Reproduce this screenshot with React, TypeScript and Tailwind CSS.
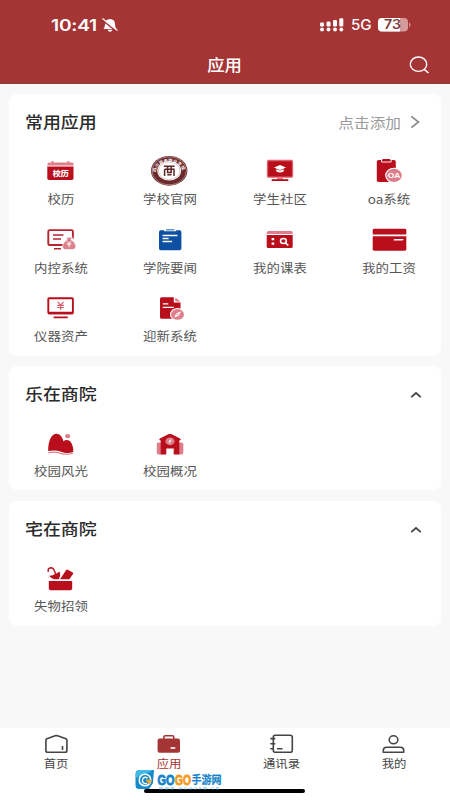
import type { ReactNode } from 'react'

const RED = '#b90f1c'
const PINK = '#dd7f8a'

function Icon({ children }: { children: ReactNode }) {
  return (
    <svg width="40" height="34" viewBox="0 0 40 34" fill="none" className="block shrink-0">
      {children}
    </svg>
  )
}

const CalendarIcon = (
  <Icon>
    <path d="M6.5 11.6V10q0-1.6 1.6-1.6h2.6V7h1.8v1.4h14V7h1.8v1.4h2.6q1.6 0 1.6 1.6v1.6z" fill={PINK} />
    <path d="M6.3 12.6h26.2v11.6q0 1.8-1.8 1.8H8.1q-1.8 0-1.8-1.8z" fill={RED} />
    <text x="11.8" y="22" fontSize="7" fontWeight="900" textLength="16" lengthAdjust="spacingAndGlyphs" fill="#fff" fontFamily="'Noto Sans CJK SC', sans-serif">
      校历
    </text>
  </Icon>
)

const SealIcon = (
  <Icon>
    <defs>
      <path id="sealArc" d="M6 20.5A13.4 10.6 0 1 1 32.4 20.5" />
    </defs>
    <ellipse cx="19.2" cy="16.8" rx="18.2" ry="14.9" fill="#6b2a2b" />
    <ellipse cx="19.2" cy="16.8" rx="17.2" ry="13.9" stroke="#e7cfcd" strokeWidth=".5" />
    <ellipse cx="19.2" cy="16.8" rx="11.9" ry="9.8" fill="#fff" />
    <ellipse cx="19.2" cy="16.8" rx="10.8" ry="8.8" stroke="#b58b89" strokeWidth=".5" />
    <text fontSize="4.2" fontWeight="700" fill="#fff" fontFamily="'Noto Sans CJK SC', sans-serif">
      <textPath href="#sealArc" startOffset="5%" textLength="35">四川商务职业学院</textPath>
    </text>
    <path d="M13.8 12.2h10.8M14.6 15.2h9.4v6.8M14.6 15.2v6.8M17.6 12.500v6h3.600v-6M17.300 20.800h4.200" stroke="#5c2423" strokeWidth="1.500" />
  </Icon>
)

const CommunityIcon = (
  <Icon>
    <rect x="7.5" y="6.5" width="25" height="16.6" rx="1.2" fill={RED} stroke="#e0606b" strokeWidth="1.3" />
    <path d="M17 23.5h6v2.6h-6z" fill={PINK} />
    <path d="M11.7 25.2h16.6v1.8H11.7z" fill={RED} />
    <path d="M20 11l6 2.6-6 2.6-6-2.6z" fill="#fff" />
    <path d="M16.2 15.2l3.8 1.6 3.8-1.6v2q-3.8 2.6-7.6 0z" fill="#fff" />
  </Icon>
)

const OaIcon = (
  <Icon>
    <rect x="7.8" y="6" width="19" height="22" rx="1.8" fill={RED} />
    <path d="M12.500 5.400v2.600h9.600V5.400" stroke="#fff" strokeWidth=".9" />
    <path d="M13.400 5h7.800v1.700h-7.800z" fill={RED} />
    <ellipse cx="25" cy="21.400" rx="8.300" ry="7.200" fill={PINK} stroke="#fff" strokeWidth="1.100" />
    <text x="18.700" y="24.200" fontSize="7.800" fontWeight="700" textLength="12.600" lengthAdjust="spacingAndGlyphs" fill="#fff" fontFamily="'Liberation Sans', sans-serif">
      OA
    </text>
  </Icon>
)

const ControlIcon = (
  <Icon>
    <path d="M22 22H8.600q-1.300 0-1.300-1.300V8.400q0-1.300 1.300-1.300h22q1.300 0 1.300 1.300v7" stroke="#b52532" strokeWidth="1.900" />
    <path d="M12 12h10.500M12 16h8M13 25.800h7" stroke="#b52532" strokeWidth="1.600" />
    <path d="M25.200 14.200h6.200l-1.400 2.400q5 3.200 4.800 7-.2 3-3 3h-7.400q-3 0-3-3 0-3.800 4.800-7z" fill={PINK} stroke="#fff" strokeWidth=".7" />
    <path d="M26.200 18.400l1.900 2 1.900-2M25.800 21h4.600M28.100 20.400v3.800" stroke="#fff" strokeWidth="1" />
  </Icon>
)

const NewsIcon = (
  <Icon>
    <path d="M10.800 7.200h3.400v1h12v-1h3.400q1.800 0 1.800 1.800v16.500q0 1.800-1.800 1.800H10.800Q9 27.300 9 25.500V9q0-1.800 1.800-1.800z" fill="#0d4fa0" />
    <path d="M16 6.200h8.400v1.200H16z" fill="#3f78bd" />
    <path d="M12.600 12.500h14.800M12.600 15.500h6M12.600 18.500h9.500" stroke="#fff" strokeWidth="1.300" />
  </Icon>
)

const TimetableIcon = (
  <Icon>
    <path d="M6.700 10.900V9.600q0-1.600 1.600-1.600h22.800q1.600 0 1.600 1.600v1.300z" fill={PINK} />
    <path d="M6.700 11.900h26v11.500q0 1.700-1.700 1.700H8.400q-1.700 0-1.700-1.700z" fill={RED} />
    <path d="M11.600 15.100h2.600v2.200h-2.600zM11.600 19.500h2.600v2.200h-2.600z" fill="#fff" />
    <ellipse cx="23.400" cy="17.900" rx="2.900" ry="2.500" stroke="#fff" strokeWidth="1.500" />
    <path d="M25.300 19.800l3 2.500" stroke="#fff" strokeWidth="1.700" />
  </Icon>
)

const SalaryIcon = (
  <Icon>
    <path d="M3.700 11.500V7.200q0-1.400 1.400-1.400h30.800q1.400 0 1.400 1.400v4.300z" fill={RED} />
    <path d="M3.700 13.200h33.600v13.100q0 1.400-1.400 1.400H5.100q-1.400 0-1.400-1.400z" fill={RED} />
    <path d="M25.200 15.900h9.500l-1 1.600h-9.200z" fill="#fff" />
  </Icon>
)

const AssetIcon = (
  <Icon>
    <rect x="7.300" y="7.200" width="24.600" height="15.200" rx=".8" stroke={RED} strokeWidth="1.900" />
    <path d="M7 20.700h25.200v2.500H7zM12.600 25.400h14.200v1.900H12.600z" fill={RED} />
    <path d="M16.700 10.800l2.900 3.300 2.900-3.300M16.300 14.300h6.600M16.300 16.500h6.600M19.600 14v5" stroke="#d35f6a" strokeWidth="1.200" />
  </Icon>
)

const WelcomeIcon = (
  <Icon>
    <path d="M11.500 6.200h12.300v5.300h6.700v14.800q0 1.500-1.500 1.500H11.500q-1.500 0-1.500-1.500V7.700q0-1.500 1.500-1.500z" fill={RED} />
    <path d="M25.300 6.400l5.200 4h-5.200z" fill={PINK} />
    <path d="M12.800 12.900h5.500M12.800 16.300h11" stroke="#fff" strokeWidth="1.200" />
    <ellipse cx="27.500" cy="23.400" rx="7" ry="5.900" fill={PINK} stroke="#fff" strokeWidth="1.100" />
    <path d="M31 20.400l-2.300 4.300-4.600 1.800 2.300-4.300z" fill="#fff" />
    <circle cx="27.500" cy="23.400" r=".8" fill={PINK} />
  </Icon>
)

const SceneryIcon = (
  <Icon>
    <path d="M7.200 25C7 16 10 7.700 15.500 7.700c4 0 6 3.800 7 7.800 1.500-2 6-2.300 8 1.700 1.500 3 1.900 5.800 1.800 8.600-4 1.800-8.500 1.300-12.300-.1-4.200-1.500-8-1.500-12.800-.7z" fill={RED} />
    <path d="M7.200 26.700q6.800-1.400 12.400.7 6.300 1.900 12.400-.2" stroke={PINK} strokeWidth="1.100" />
    <ellipse cx="26.700" cy="10.100" rx="2.600" ry="2.200" fill={PINK} />
  </Icon>
)

const CampusIcon = (
  <Icon>
    <rect x="6.800" y="16.600" width="6" height="11.800" rx="1.600" fill={PINK} />
    <rect x="27.300" y="16.600" width="6" height="11.800" rx="1.600" fill={PINK} />
    <path d="M18.200 8.300q1.800-.7 3.600 0l8.200 4.200q.8.500.8 1.500l-1.500.4v14.200h-5.600v-6h-7.400v6h-5.600V14.400l-1.500-.4q0-1 .8-1.500z" fill={RED} />
    <ellipse cx="20" cy="15.300" rx="4.600" ry="3.900" fill={PINK} />
    <path d="M21.400 12.600l-1 1.900h1.300l-2.900 3.600.7-2.700h-1.200z" fill="#fff" />
  </Icon>
)

const LostIcon = (
  <Icon>
    <path d="M7.200 10.400Q6.600 6.900 9.800 6.700q2.500 0 3.400 2.600l1.500 4" stroke={RED} strokeWidth="1.400" strokeLinecap="round" />
    <path d="M8.200 14.600q3.300.3 5.400-1.400 2.300-.5 4.900-2.600 1.700 4-.9 7.600h-3.900q-3.700-.4-5.500-3.600z" fill={RED} />
    <path d="M19 18.200L25.200 9q.6-.7 1.500-.2l5 2.800q.9.500.3 1.400l-3.600 5.200z" fill={RED} />
    <path d="M7.800 19.900h23.400v7.500q0 1.800-1.800 1.800H9.600q-1.800 0-1.800-1.800z" fill={RED} />
  </Icon>
)

type App = [string, ReactNode]

const common: App[] = [
  ['校历', CalendarIcon],
  ['学校官网', SealIcon],
  ['学生社区', CommunityIcon],
  ['oa系统', OaIcon],
  ['内控系统', ControlIcon],
  ['学院要闻', NewsIcon],
  ['我的课表', TimetableIcon],
  ['我的工资', SalaryIcon],
  ['仪器资产', AssetIcon],
  ['迎新系统', WelcomeIcon],
]

function Grid({ apps }: { apps: App[] }) {
  return (
    <div className="-mx-[3px] grid grid-cols-4 gap-y-[16.5px]">
      {apps.map(([label, icon]) => (
        <div key={label} className="flex h-[52px] flex-col items-center">
          {icon}
          <span className="mt-[2px] h-4 scale-x-[1.12] text-[12px] leading-[18px] whitespace-nowrap text-[#555]">{label}</span>
        </div>
      ))}
    </div>
  )
}

function Section({ title, action, apps, className }: { title: string; action: ReactNode; apps: App[]; className: string }) {
  return (
    <section className={`mx-[9px] rounded-lg bg-white ${className}`}>
      <div className="flex h-[60px] items-start justify-between pr-[19px] pl-4">
        <h2 className="mt-[15px] origin-left scale-x-[1.12] text-[16px] leading-6 font-medium text-[#2b2b2b]">{title}</h2>
        {action}
      </div>
      <Grid apps={apps} />
    </section>
  )
}

const Collapse = (
  <svg width="12" height="8" viewBox="0 0 12 8" fill="none" className="mt-[25px]">
    <path d="M1.2 6.2L6 2l4.8 4.2" stroke="#444" strokeWidth="1.700" />
  </svg>
)

const AddMore = (
  <div className="mt-4 flex h-6 items-center">
    <span className="origin-right scale-x-[1.12] text-[14px] text-[#999]">点击添加</span>
    <svg width="10" height="14" viewBox="0 0 10 14" fill="none" className="mr-[2px] ml-[9px]">
      <path d="M1.3 1.3L8.500 7l-7.200 5.700" stroke="#888" strokeWidth="1.600" />
    </svg>
  </div>
)

function TabIcon({ children }: { children: ReactNode }) {
  return (
    <svg width="40" height="24" viewBox="0 0 40 24" fill="none" stroke="#444" strokeWidth="1.600" className="block">
      {children}
    </svg>
  )
}

const tabs: App[] = [
  [
    '首页',
    <TabIcon>
      <path d="M9.900 10.300q0-1.100 1-1.500l8.300-3q1.200-.4 2.400 0l8.300 3q1 .4 1 1.500v10.200q0 1.800-1.800 1.800H11.700q-1.800 0-1.800-1.800zM26.500 16v4" />
    </TabIcon>,
  ],
  [
    '应用',
    <TabIcon>
      <path d="M14.800 9V7.200q0-1.400 1.400-1.400h7.200q1.400 0 1.400 1.400V9" stroke="#a53535" />
      <rect x="8.600" y="8.500" width="22.400" height="14.300" rx="2" fill="#a53535" stroke="none" />
      <path d="M21.500 18h4.800" stroke="#fff" />
    </TabIcon>,
  ],
  [
    '通讯录',
    <TabIcon>
      <rect x="12.300" y="5.200" width="19" height="17" rx="2" />
      <path d="M9.300 8.600h5M9.300 13.700h5M9.300 18.800h3M16 18.800h5.500" />
    </TabIcon>,
  ],
  [
    '我的',
    <TabIcon>
      <ellipse cx="19.500" cy="9.800" rx="4.300" ry="4" />
      <path d="M9.300 22.300v-1.700q0-3.300 3.500-3.300h13.400q3.500 0 3.500 3.300v1.700z" strokeLinejoin="round" />
    </TabIcon>,
  ],
]

function Watermark() {
  return (
    <svg width="90" height="28" viewBox="0 0 90 28" className="absolute top-[767px] left-[134px] overflow-visible">
      <path d="M6 3h14l-1 13-4 6H5q-3.500 0-3.500-4V7Q1.500 3 6 3z" fill="#1689c9" />
      <path d="M6 3h13l-5 3-12 5V7q0-4 4-4z" fill="#42b9e6" />
      <circle cx="11" cy="13" r="5.800" fill="none" stroke="#fff" strokeWidth="1.500" />
      <path d="M13.500 11.200Q11 9.200 9 11.500q-1.300 2.200.2 4.200 2 1.700 4 .3" fill="none" stroke="#fff" strokeWidth="1.300" />
      <path d="M11.500 12.600h6l-1.500 5-2-1.800z" fill="#f6a527" />
      <text x="23.500" y="17.500" fontSize="15" fontWeight="700" textLength="17" lengthAdjust="spacingAndGlyphs" fill="#1583ca" stroke="#1583ca" strokeWidth=".9" fontFamily="'Liberation Sans', sans-serif">GO</text>
      <text x="41" y="17.500" fontSize="15" fontWeight="700" textLength="16" lengthAdjust="spacingAndGlyphs" fill="#f59a1b" stroke="#f59a1b" strokeWidth=".9" fontFamily="'Liberation Sans', sans-serif">GO</text>
      <text x="57.500" y="16.600" fontSize="11.500" fontWeight="700" textLength="30" lengthAdjust="spacingAndGlyphs" fill="#1583ca" stroke="#1583ca" strokeWidth=".2" fontFamily="'Noto Sans CJK SC', sans-serif">手游网</text>
      <text x="25" y="23" fontSize="4" textLength="60" fill="#3fa0dc" fontFamily="'Liberation Sans', sans-serif">WWW.GOGO9W.CN</text>
    </svg>
  )
}

export default function App() {
  return (
    <div className="relative flex h-[800px] w-[450px] flex-col overflow-hidden bg-[#f8f8f8] font-['Noto_Sans_CJK_SC',sans-serif]">
      <header className="h-[84px] shrink-0 border-b border-[#963c3c] bg-[#a53535] text-white">
        <div className="flex h-[50px] items-center justify-between pr-[38px] pl-[51px] font-['Inter','Liberation_Sans',sans-serif]">
          <div className="flex items-center">
            <span className="w-[47px] origin-left scale-x-[1.2] text-[16px] leading-5 font-semibold tracking-[-0.2px]">10:41</span>
            <svg width="18" height="16" viewBox="0 0 18 16" fill="none" className="ml-[3px]">
              <path d="M2.500 12Q4 10.500 4 7q0-4.500 5-5 5 .5 5 5 0 3.500 1.500 5zM6.500 12.800h5q-.8 2-2.500 2t-2.500-2z" fill="#fff" />
              <path d="M.8 2.600l15 12" stroke="#a53535" strokeWidth="1.500" />
              <path d="M1.500 1.500l15 12" stroke="#fff" strokeWidth="1.100" />
            </svg>
          </div>
          <div className="flex items-center">
            <svg width="24" height="14" viewBox="0 0 24 14" fill="#fff">
              <rect x="0" y="4.500" width="4" height="4" rx="1.300" />
              <rect x="6.500" y="3.500" width="4" height="5" rx="1.300" />
              <rect x="13" y="2" width="4" height="6.500" rx="1.300" />
              <rect x="19.300" y=".3" width="4" height="8.200" rx="1.300" />
              <circle cx="2" cy="11.500" r="1.900" />
              <circle cx="8.500" cy="11.500" r="1.900" />
              <circle cx="15" cy="11.500" r="1.900" />
              <circle cx="21.300" cy="11.500" r="1.900" />
            </svg>
            <span className="ml-[7px] w-[27px] origin-left scale-x-[1.08] text-[14px] leading-5 font-medium">5G</span>
            <svg width="34" height="14" viewBox="0 0 34 14">
              <rect x="0" y="0" width="30" height="13.600" rx="4" fill="#d59b9b" />
              <path d="M4 0h18v13.600H4q-4 0-4-4V4q0-4 4-4z" fill="#fff" />
              <path d="M31 4.500q1.500.6 1.500 2.300T31 9.100z" fill="#d59b9b" />
              <text x="6" y="11.300" fontSize="12.500" fontWeight="600" textLength="17" lengthAdjust="spacingAndGlyphs" fill="#7c3a3c" fontFamily="Inter, sans-serif">73</text>
            </svg>
          </div>
        </div>
        <div className="grid h-[30px] grid-cols-[1fr_auto_1fr] items-center">
          <span />
          <h1 className="mb-[2px] scale-x-[1.12] text-[15.5px] leading-6 font-medium">应用</h1>
          <svg width="21" height="18" viewBox="0 0 21 18" fill="none" stroke="#fff" strokeWidth="1.400" className="mr-5 justify-self-end">
            <ellipse cx="9.500" cy="8.200" rx="8.200" ry="7.200" />
            <path d="M15.200 13.400l4.300 3.600" strokeWidth="1.600" />
          </svg>
        </div>
      </header>

      <main className="flex-1 pt-[10px]">
        <Section title="常用应用" action={AddMore} apps={common} className="h-[261.5px]" />
        <Section title="乐在商院" action={Collapse} apps={[['校园风光', SceneryIcon], ['校园概况', CampusIcon]]} className="mt-[10.5px] h-[124px]" />
        <Section title="宅在商院" action={Collapse} apps={[['失物招领', LostIcon]]} className="mt-[11px] h-[125px]" />
      </main>

      <nav className="grid h-[72px] shrink-0 grid-cols-4 bg-white pt-[2px]">
        {tabs.map(([label, icon]) => (
          <div key={label} className="flex flex-col items-center">
            {icon}
            <span className={`scale-x-[1.12] text-[11px] leading-[18px] ${label === '应用' ? 'text-[#a53535]' : 'text-[#444]'}`}>{label}</span>
          </div>
        ))}
      </nav>
      <div className="absolute top-[789px] left-[144px] h-[4px] w-[161px] rounded-full bg-black" />
      <Watermark />
    </div>
  )
}
